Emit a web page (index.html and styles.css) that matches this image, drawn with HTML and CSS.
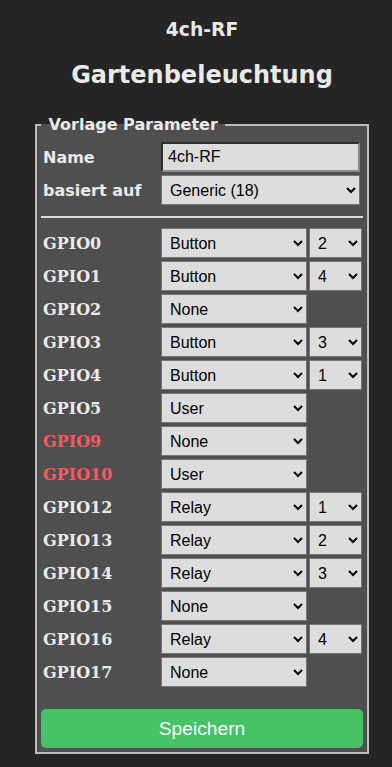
FILE: index.html
```html
<!DOCTYPE html>
<html lang="de">
<head>
<meta charset="utf-8">
<title>4ch-RF - Vorlage</title>
<link rel="stylesheet" href="styles.css">
</head>
<body>
<div class="page">
  <h3 class="dev">4ch-RF</h3>
  <h2 class="name">Gartenbeleuchtung</h2>
  <fieldset class="box">
    <legend class="lg">&nbsp;Vorlage Parameter&nbsp;</legend>
    <div class="params">
      <label class="lbl" for="nm">Name</label>
      <input class="txt" id="nm" type="text" value="4ch-RF">
      <label class="lbl" for="bs">basiert auf</label>
      <select class="sel" id="bs"><option>Generic (18)</option></select>
    </div>
    <hr class="sep">
    <div class="gpio">
      <span class="gl">GPIO0</span>
      <select class="sel"><option>Button</option></select>
      <select class="sel"><option>2</option></select>

      <span class="gl">GPIO1</span>
      <select class="sel"><option>Button</option></select>
      <select class="sel"><option>4</option></select>

      <span class="gl">GPIO2</span>
      <select class="sel"><option>None</option></select>
      <span></span>

      <span class="gl">GPIO3</span>
      <select class="sel"><option>Button</option></select>
      <select class="sel"><option>3</option></select>

      <span class="gl">GPIO4</span>
      <select class="sel"><option>Button</option></select>
      <select class="sel"><option>1</option></select>

      <span class="gl">GPIO5</span>
      <select class="sel"><option>User</option></select>
      <span></span>

      <span class="gl warn">GPIO9</span>
      <select class="sel"><option>None</option></select>
      <span></span>

      <span class="gl warn">GPIO10</span>
      <select class="sel"><option>User</option></select>
      <span></span>

      <span class="gl">GPIO12</span>
      <select class="sel"><option>Relay</option></select>
      <select class="sel"><option>1</option></select>

      <span class="gl">GPIO13</span>
      <select class="sel"><option>Relay</option></select>
      <select class="sel"><option>2</option></select>

      <span class="gl">GPIO14</span>
      <select class="sel"><option>Relay</option></select>
      <select class="sel"><option>3</option></select>

      <span class="gl">GPIO15</span>
      <select class="sel"><option>None</option></select>
      <span></span>

      <span class="gl">GPIO16</span>
      <select class="sel"><option>Relay</option></select>
      <select class="sel"><option>4</option></select>

      <span class="gl">GPIO17</span>
      <select class="sel"><option>None</option></select>
      <span></span>
    </div>
    <button class="save" type="button">Speichern</button>
  </fieldset>
</div>
</body>
</html>
```

FILE: styles.css
```css
html, body {
  margin: 0;
  padding: 0;
  background: #252525;
}
body {
  font-family: "DejaVu Sans", Verdana, sans-serif;
  color: #eaeaea;
}
.page {
  width: 334px;
  margin-left: 35px;
  padding-top: 19px;
}
.dev {
  margin: 0;
  text-align: center;
  font-size: 18.72px;
  line-height: 22px;
  font-weight: bold;
}
.name {
  margin: 20px 0 26px;
  text-align: center;
  font-size: 24px;
  line-height: 28px;
  font-weight: bold;
}
.box {
  margin: 0;
  padding: 0 4px 4px;
  border: 2px solid #bdbdbd;
  background: #4f4f4f;
  min-width: 0;
}
.lg {
  padding: 0 2px;
  font-size: 16px;
  line-height: 19px;
  font-weight: bold;
}
.params {
  display: grid;
  grid-template-columns: 118px 199px;
  row-gap: 3px;
  margin: 8px 0 0 2px;
  align-items: center;
}
.lbl {
  font-size: 16px;
  font-weight: bold;
}
.txt {
  box-sizing: border-box;
  height: 30px;
  width: 199px;
  margin: 0;
  padding: 0 5px;
  background: #dddddd;
  color: #000;
  font-family: "Liberation Sans", Arial, sans-serif;
  font-size: 16px;
  border: 2px solid;
  border-color: #2e2e2e #8a8a8a #8a8a8a #2e2e2e;
  outline: none;
}
.sel {
  box-sizing: border-box;
  height: 30px;
  width: 100%;
  margin: 0;
  padding: 0 4px;
  background-color: #dddddd;
  color: #000;
  font-family: "Liberation Sans", Arial, sans-serif;
  font-size: 16px;
  border: 1px solid #767676;
  border-radius: 0;
}
.sep {
  margin: 11px 0 10px;
  height: 0;
  border: 0;
  border-top: 2px solid #dcdcdc;
}
.gpio {
  display: grid;
  grid-template-columns: 116px 146px 53px;
  column-gap: 2px;
  row-gap: 3px;
  margin-left: 2px;
  align-items: center;
}
.gl {
  font-family: "DejaVu Serif", "Liberation Serif", serif;
  font-size: 16px;
  font-weight: bold;
  color: #eaeaea;
}
.gl.warn {
  color: #ff5661;
}
.save {
  display: block;
  width: 100%;
  height: 39px;
  margin-top: 22px;
  padding: 0;
  border: 0;
  border-radius: 5px;
  background: #47c266;
  color: #faffff;
  font-family: "Liberation Sans", Arial, sans-serif;
  font-size: 19.2px;
  line-height: 39px;
}
```
